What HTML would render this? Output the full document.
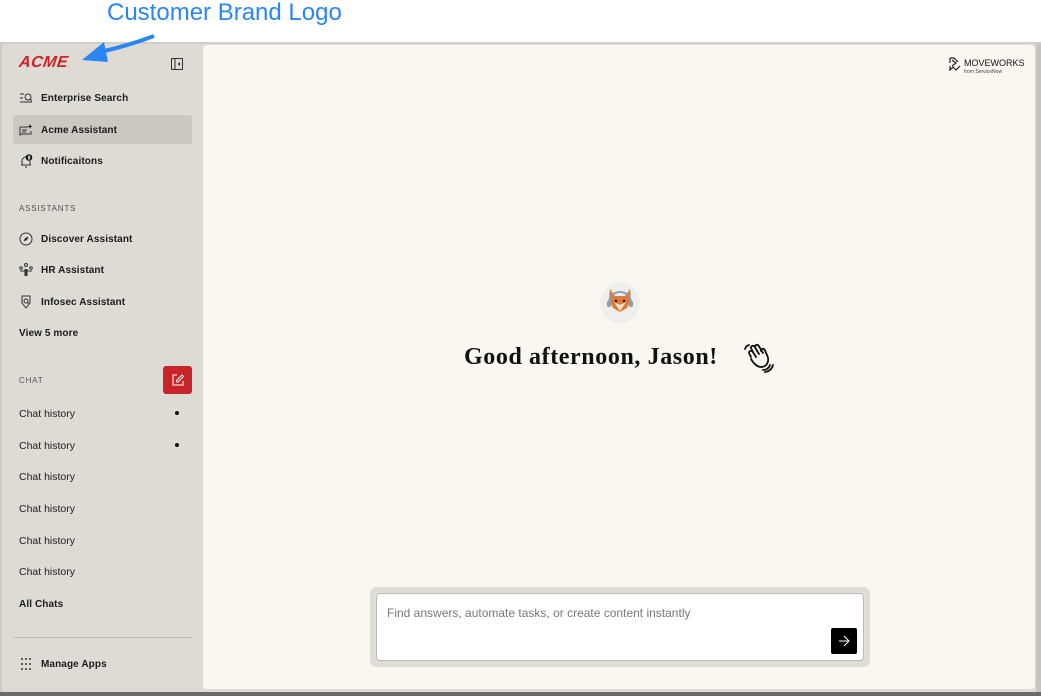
<!DOCTYPE html>
<html><head><meta charset="utf-8"><style>
*{margin:0;padding:0;box-sizing:border-box}
body{width:1041px;height:696px;overflow:hidden;background:#fff;font-family:"Liberation Sans",sans-serif;position:relative}
.title{position:absolute;left:107px;top:-1px;font-size:24px;color:#2a86f0;}
.frame{position:absolute;left:0;top:42px;width:1041px;height:654px;background:#dedad4;border-top:2px solid #d2cec6;border-left:2px solid #d0ccc4}
.bottom{position:absolute;left:0;top:692px;width:1041px;height:4px;background:#6c6a66}
.main{position:absolute;left:203px;top:45px;width:832px;height:644px;background:#faf7f0;border-radius:4px}
.rstrip{position:absolute;left:1036px;top:44px;width:5px;height:648px;background:#c9c5bc}
.item{position:absolute;left:19px;font-size:10px;font-weight:bold;color:#1c1c1c;display:flex;align-items:center;height:14px;letter-spacing:0.1px}
.item svg{margin-right:8px}
.sec{position:absolute;left:19px;font-size:8px;letter-spacing:0.8px;color:#555}
.ch{position:absolute;left:19px;font-size:10.5px;color:#222}
.dot{position:absolute;left:175px;width:4px;height:4px;border-radius:50%;background:#111}
</style></head><body>
<div class="title">Customer Brand Logo</div>
<div class="frame"></div>
<div class="rstrip"></div>
<div class="main"></div>
<div class="bottom"></div>
<svg style="position:absolute;left:78px;top:30px" width="80" height="36"><path d="M76 6 C60 12 40 18 22 22" stroke="#2a86f0" stroke-width="4" fill="none"/><path d="M4 30 L26 12 L30 32 Z" fill="#2a86f0"/></svg>
<div style="position:absolute;left:19px;top:54px;font:italic 900 16px 'Liberation Sans',sans-serif;color:#c9242a;letter-spacing:0.5px;transform:skewX(-8deg)">ACME<span style="font-size:5px">.</span></div>
<svg style="position:absolute;left:171px;top:58px" width="12" height="12"><rect x="0.5" y="0.5" width="11" height="11" fill="none" stroke="#333"/><line x1="4" y1="0.5" x2="4" y2="11.5" stroke="#333"/><path d="M9 4 L6.5 6 L9 8Z" fill="#333"/></svg>
<div class="item" style="top:91px"><svg width="14" height="12"><path d="M1 2h4M1 6h3M1 10h12" stroke="#333" fill="none"/><circle cx="9" cy="5" r="3" stroke="#333" fill="none"/><path d="M11 7l2 2" stroke="#333"/></svg>Enterprise Search</div>
<div style="position:absolute;left:13px;top:115px;width:179px;height:29px;background:#ccc7c0;border-radius:3px"></div>
<div class="item" style="top:123px"><svg width="14" height="13"><path d="M1 3h8M1 3v8l2-1h9V7" stroke="#333" fill="none"/><path d="M3 6h5M3 8h4" stroke="#333"/><path d="M11 0l.7 1.8 1.8.7-1.8.7L11 5l-.7-1.8L8.5 2.5l1.8-.7z" fill="#222"/></svg>Acme Assistant</div>
<div class="item" style="top:154px"><svg width="14" height="14"><path d="M3 11V7a4 4 0 0 1 6-3.5M11 7v4M2 11h10M6 13h2" stroke="#333" fill="none"/><circle cx="10" cy="3.5" r="3.3" fill="#111"/><text x="8.8" y="5.5" font-size="5" fill="#fff" font-family="Liberation Sans">8</text></svg>Notificaitons</div>
<div class="sec" style="top:204px">ASSISTANTS</div>
<div class="item" style="top:232px"><svg width="14" height="14"><circle cx="7" cy="7" r="6" stroke="#333" fill="none"/><path d="M9.5 4.5L8 8 4.5 9.5 6 6z" fill="#333"/></svg>Discover Assistant</div>
<div class="item" style="top:263px"><svg width="14" height="14"><circle cx="7" cy="2" r="1.5" stroke="#333" fill="none"/><circle cx="2" cy="5" r="1.3" stroke="#333" fill="none"/><circle cx="12" cy="5" r="1.3" stroke="#333" fill="none"/><path d="M1 8h12" stroke="#333"/><rect x="5.5" y="6" width="3" height="7" fill="#333"/></svg>HR Assistant</div>
<div class="item" style="top:295px"><svg width="14" height="14"><path d="M3 1h8v7l-4 5-4-5z" stroke="#333" fill="none"/><circle cx="7" cy="6" r="2" stroke="#333" fill="none"/><path d="M8.5 7.5l1.2 1.2" stroke="#333"/></svg>Infosec Assistant</div>
<div class="item" style="top:326px">View 5 more</div>
<div class="sec" style="top:376px">CHAT</div>
<div style="position:absolute;left:163px;top:366px;width:29px;height:28px;background:#c8242a;border-radius:3px"><svg style="position:absolute;left:9px;top:8px" width="12" height="12"><path d="M5 1H1v10h10V7" stroke="#fff" fill="none"/><path d="M10 1l1.5 1.5L6 8H4.5V6.5z" stroke="#fff" fill="none"/></svg></div>
<div class="ch" style="top:408px">Chat history</div><div class="dot" style="top:411px"></div>
<div class="ch" style="top:440px">Chat history</div><div class="dot" style="top:443px"></div>
<div class="ch" style="top:471px">Chat history</div>
<div class="ch" style="top:503px">Chat history</div>
<div class="ch" style="top:535px">Chat history</div>
<div class="ch" style="top:566px">Chat history</div>
<div class="item" style="top:597px">All Chats</div>
<div style="position:absolute;left:13px;top:637px;width:179px;height:1px;background:#c2beb6"></div>
<div class="item" style="top:657px"><svg width="14" height="14"><g fill="#333"><circle cx="3" cy="2" r="1"/><circle cx="7" cy="2" r="1"/><circle cx="11" cy="2" r="1"/><circle cx="3" cy="7" r="1"/><circle cx="7" cy="7" r="1"/><circle cx="11" cy="7" r="1"/><circle cx="3" cy="12" r="1"/><circle cx="7" cy="12" r="1"/><circle cx="11" cy="12" r="1"/></g></svg>Manage Apps</div>
<svg style="position:absolute;left:949px;top:57px" width="12" height="14"><path d="M1 1h4l4 4M1 1v5M3 3l4 3-4 3M1 9v4l3-3 3 3 4-4" stroke="#222" fill="none" stroke-width="1.2"/></svg>
<div style="position:absolute;left:964px;top:58px;font-size:9px;color:#111">MOVEWORKS</div>
<div style="position:absolute;left:964px;top:69px;font-size:5px;color:#444">from ServiceNow</div>
<div style="position:absolute;left:600px;top:283px;width:40px;height:40px;border-radius:50%;background:#efeeec"></div>
<svg style="position:absolute;left:606px;top:286px" width="28" height="32"><path d="M4 3l5 7h10l5-7 1 11-4 8-7 4-7-4-4-8z" fill="#e07a3a"/><path d="M8 16l6 9 6-9-6 3z" fill="#fbe6d0"/><circle cx="10" cy="15" r="1.3" fill="#222"/><circle cx="18" cy="15" r="1.3" fill="#222"/><path d="M3 17a11 11 0 0 1 22 0" stroke="#8aa0b0" stroke-width="2" fill="none"/><rect x="1" y="15" width="4" height="6" rx="1.5" fill="#8aa0b0"/><rect x="23" y="15" width="4" height="6" rx="1.5" fill="#8aa0b0"/></svg>
<div style="position:absolute;left:464px;top:344px;font:bold 24px 'Liberation Serif',serif;color:#111;letter-spacing:0.6px;white-space:nowrap">Good afternoon, Jason!</div>
<svg style="position:absolute;left:743px;top:343px" width="32" height="30"><g stroke="#111" stroke-width="1.8" fill="none" stroke-linecap="round"><path d="M8 14l-2-4a2 2 0 0 1 3.5-1.5L13 14M11 11L8 5a2 2 0 0 1 3.5-1.5L16 11M14 8l-2-4a2 2 0 0 1 3.5-1.5L20 10M18 8a2 2 0 0 1 3.5-1.5L24 12c3 6 0 12-6 12-4 0-7-3-10-8"/><path d="M2 6a6 6 0 0 1 4-4M20 27a7 7 0 0 0 7-5M22 29a9 9 0 0 0 8-7"/></g></svg>
<div style="position:absolute;left:370px;top:587px;width:500px;height:80px;background:#e0ddd6;border-radius:7px"></div>
<div style="position:absolute;left:376px;top:593px;width:488px;height:68px;background:#fff;border:1px solid #bdbab4;border-radius:4px"></div>
<div style="position:absolute;left:387px;top:606px;font-size:12px;color:#777">Find answers, automate tasks, or create content instantly</div>
<div style="position:absolute;left:831px;top:628px;width:26px;height:26px;background:#000;border-radius:2px"><svg style="position:absolute;left:7px;top:7px" width="12" height="12"><path d="M1 6h10M6 1l5 5-5 5" stroke="#fff" fill="none"/></svg></div>
</body></html>
